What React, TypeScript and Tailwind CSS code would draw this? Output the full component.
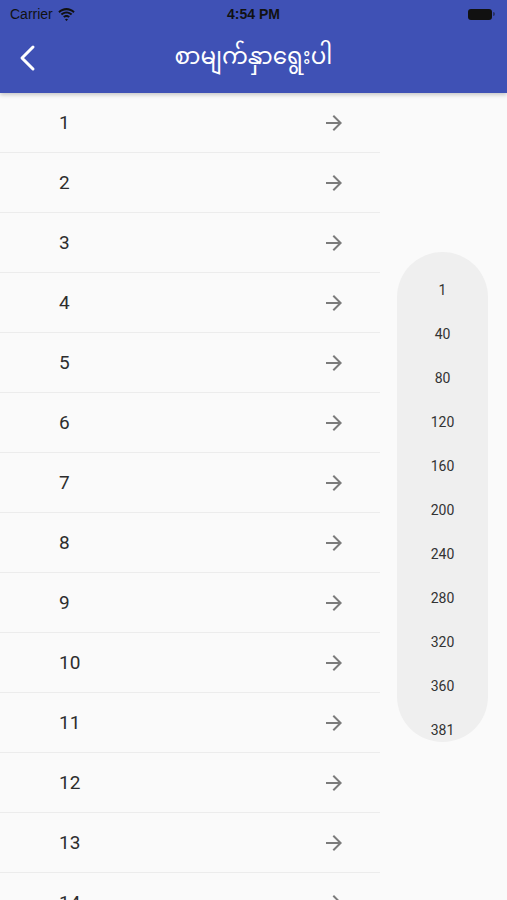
import React from 'react'

const rows = Array.from({ length: 14 }, (_, i) => i + 1)
const index = [1, 40, 80, 120, 160, 200, 240, 280, 320, 360, 381]

function ArrowForward() {
  return (
    <svg width="24" height="24" viewBox="0 0 24 24" fill="#7b7b7b">
      <path d="M12 4l-1.41 1.41L16.17 11H4v2h12.17l-5.58 5.59L12 20l8-8z" />
    </svg>
  )
}

export default function App() {
  return (
    <div
      className="relative w-[507px] h-[900px] overflow-hidden bg-[#fafafa]"
      style={{ fontFamily: 'Roboto, "Noto Sans", "Noto Sans Myanmar", sans-serif' }}
    >
      {/* header */}
      <div className="bg-[#3f51b5] h-[93px] shadow-[0_2px_4px_rgba(0,0,0,0.2)] relative z-10">
        <div className="h-[28px] flex items-center justify-between px-[10px] text-[14px] text-[#111]">
          <div className="flex items-center gap-[5px] w-[120px]">
            <span style={{ fontFamily: '"Liberation Sans", sans-serif' }}>Carrier</span>
            <svg width="17" height="13" viewBox="0 0 17 13" fill="#111">
              <path d="M8.5 2.2c2.6 0 5 1 6.8 2.7l1.4-1.5C14.5 1.3 11.6 0 8.5 0S2.5 1.3.3 3.4l1.4 1.5C3.5 3.2 5.9 2.2 8.5 2.2z" />
              <path d="M8.5 5.6c1.7 0 3.2.6 4.4 1.7l1.4-1.5C12.8 4.3 10.7 3.4 8.5 3.4S4.2 4.3 2.7 5.8l1.4 1.5c1.2-1.1 2.7-1.7 4.4-1.7z" />
              <path d="M8.5 9c.8 0 1.5.3 2 .8l1.4-1.5C11 7.5 9.8 6.9 8.5 6.9S6 7.5 5.1 8.3l1.4 1.5c.5-.5 1.2-.8 2-.8zM8.5 13l1.5-1.6c-.4-.4-.9-.6-1.5-.6s-1.1.2-1.5.6z" />
            </svg>
          </div>
          <span className="font-semibold" style={{ fontFamily: '"Liberation Sans", sans-serif' }}>4:54 PM</span>
          <div className="w-[120px] flex justify-end pr-[2px]">
            <div className="flex items-center">
              <div className="w-[24px] h-[11px] rounded-[3px] bg-[#111]" />
              <div className="w-[2px] h-[4px] rounded-r-sm bg-[#111] opacity-50 ml-[1px]" />
            </div>
          </div>
        </div>
        <div className="h-[65px] flex items-center relative">
          <div className="absolute left-[18px] top-[16px]">
            <svg width="20" height="28" viewBox="0 0 20 28" fill="none" stroke="white" strokeWidth="3" strokeLinecap="round" strokeLinejoin="round">
              <path d="M15 3L4 14l11 11" />
            </svg>
          </div>
          <div className="flex-1 text-center text-white text-[23px] -mt-[6px]">စာမျက်နှာရွေးပါ</div>
        </div>
      </div>

      {/* list */}
      <div className="w-[380px]">
        {rows.map((n) => (
          <div key={n} className="h-[60px] flex items-center border-b border-[#ececec]">
            <span className="pl-[59px] pt-[2px] flex-1 text-[19px] text-[#2d2d2d]">{n}</span>
            <div className="pr-[34px] flex items-center">
              <ArrowForward />
            </div>
          </div>
        ))}
      </div>

      {/* index */}
      <div className="absolute left-[397px] top-[252px] w-[91px] h-[490px] rounded-full bg-[#efefef] flex flex-col items-center pt-[16px]">
        {index.map((v) => (
          <div key={v} className="h-[44px] shrink-0 flex items-center text-[14px] text-[#333]">
            {v}
          </div>
        ))}
      </div>
    </div>
  )
}
